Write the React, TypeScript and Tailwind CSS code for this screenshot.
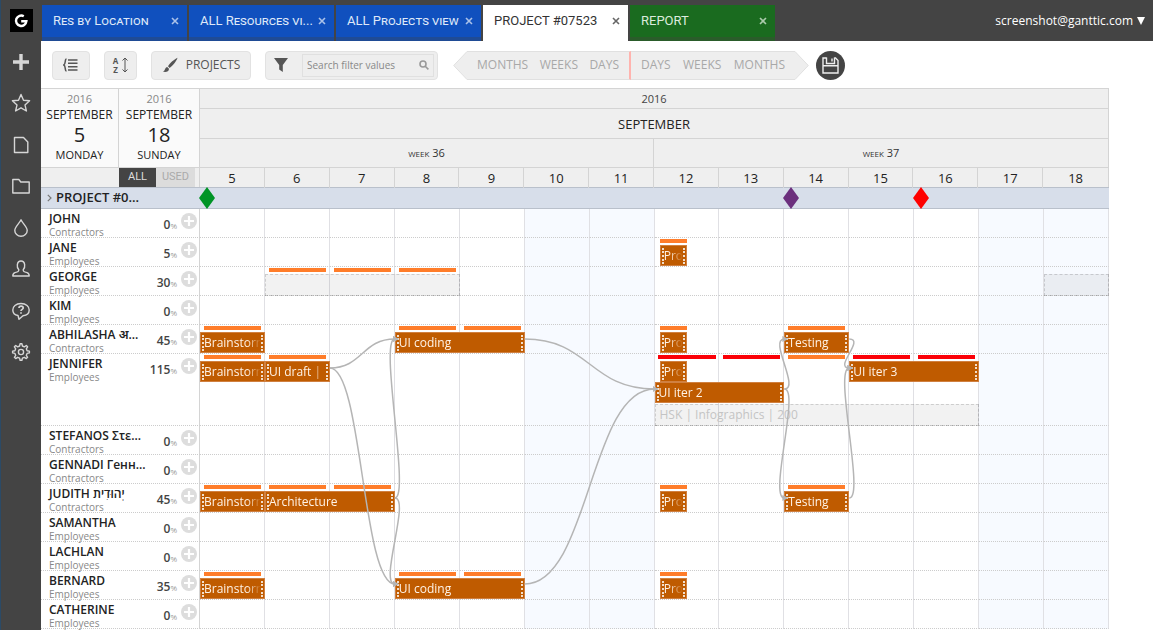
import { useState } from 'react';
import type { ReactNode } from 'react';

type Span = [start: number, end: number];

interface Task {
  label: string;
  span: Span;
  lane?: number;
}

interface Resource {
  name: string;
  group: string;
  load: number;
  tall?: boolean;
  tasks?: Task[];
  loads?: Span[];
  overloads?: Span[];
  ghosts?: Task[];
}

// days are counted from the first visible one, so 0 is September 5
const DAYS = [5, 6, 7, 8, 9, 10, 11, 12, 13, 14, 15, 16, 17, 18];
const WEEKEND = [10, 11, 17, 18];
const PRO: Span = [7.08, 7.5];

const day = (n: number): Span => [n + 0.06, n + 0.94];

const RESOURCES: Resource[] = [
  { name: 'JOHN', group: 'Contractors', load: 0 },
  { name: 'JANE', group: 'Employees', load: 5, tasks: [{ label: 'Pro', span: PRO }], loads: [PRO] },
  {
    name: 'GEORGE',
    group: 'Employees',
    load: 30,
    loads: [day(1), day(2), day(3)],
    ghosts: [{ label: '', span: [1, 4] }, { label: '', span: [13, 14] }],
  },
  { name: 'KIM', group: 'Employees', load: 0 },
  {
    name: 'ABHILASHA अ...',
    group: 'Contractors',
    load: 45,
    tasks: [
      { label: 'Brainstorm', span: [0, 1] },
      { label: 'UI coding', span: [3, 5] },
      { label: 'Pro', span: PRO },
      { label: 'Testing', span: [9, 10] },
    ],
    loads: [day(0), day(3), day(4), PRO, day(9)],
  },
  {
    name: 'JENNIFER',
    group: 'Employees',
    load: 115,
    tall: true,
    tasks: [
      { label: 'Brainstorm', span: [0, 1] },
      { label: 'UI draft |', span: [1, 2] },
      { label: 'Pro', span: PRO },
      { label: 'UI iter 2', span: [7, 9], lane: 1 },
      { label: 'UI iter 3', span: [10, 12] },
    ],
    loads: [day(0), day(1), day(9)],
    overloads: [day(7), day(8), day(10), day(11)],
    ghosts: [{ label: 'HSK | Infographics | 200', span: [7, 12], lane: 2 }],
  },
  { name: 'STEFANOS Στε...', group: 'Contractors', load: 0 },
  { name: 'GENNADI Генн...', group: 'Contractors', load: 0 },
  {
    name: 'JUDITH יְהוּדִית',
    group: 'Contractors',
    load: 45,
    tasks: [
      { label: 'Brainstorm', span: [0, 1] },
      { label: 'Architecture', span: [1, 3] },
      { label: 'Pro', span: PRO },
      { label: 'Testing', span: [9, 10] },
    ],
    loads: [day(0), day(1), day(2), PRO, day(9)],
  },
  { name: 'SAMANTHA', group: 'Employees', load: 0 },
  { name: 'LACHLAN', group: 'Employees', load: 0 },
  {
    name: 'BERNARD',
    group: 'Employees',
    load: 35,
    tasks: [
      { label: 'Brainstorm', span: [0, 1] },
      { label: 'UI coding', span: [3, 5] },
      { label: 'Pro', span: PRO },
    ],
    loads: [day(0), day(3), day(4), PRO],
  },
  { name: 'CATHERINE', group: 'Employees', load: 0 },
];

const TABS = [
  { label: 'Res by Location', tone: 'blue' },
  { label: 'ALL Resources vi...', tone: 'blue' },
  { label: 'ALL Projects view', tone: 'blue' },
  { label: 'PROJECT #07523', tone: 'white' },
  { label: 'REPORT', tone: 'green' },
];

const TAB_TONES: Record<string, string> = {
  blue: 'bg-[#1050be] border-[#1f4b95] text-[#dfe8f8]',
  white: 'bg-white border-white text-[#333]',
  green: 'bg-[#1a6b1f] border-[#2a5c2a] text-[#dcebdc]',
};

const LANES = ['top-[7px]', 'top-[28px]', 'top-[50px]'];

// dependency lines, [from day, from y, to day, to y]
const LINKS = [
  [2, 159, 3, 130],
  [2, 159, 3, 375],
  [3, 289, 3, 130],
  [3, 289, 3, 375],
  [5, 130, 7, 180],
  [5, 375, 7, 180],
  [9, 180, 9, 130],
  [9, 180, 9, 289],
  [10, 130, 10, 159],
  [10, 289, 10, 159],
];

const place = ([start, end]: Span) => ({
  left: `${(start / 14) * 100}%`,
  width: `${((end - start) / 14) * 100}%`,
});

const linkPath = ([d1, y1, d2, y2]: number[]) => {
  const x1 = d1 * 65;
  const x2 = d2 * 65;
  const bend = d1 === d2 ? 16 : (x2 - x1) / 2;
  return `M${x1} ${y1} C${x1 + bend} ${y1} ${x2 - bend} ${y2} ${x2} ${y2}`;
};

const LineIcon = ({ children }: { children: ReactNode }) => (
  <svg viewBox="0 0 20 20" className="size-5" fill="none" stroke="currentColor" strokeWidth="1.4" strokeLinejoin="round">
    {children}
  </svg>
);

const MENU = [
  { label: 'Add', icon: <path d="M10 2v16M2 10h16" strokeWidth="3.4" /> },
  { label: 'Favourites', icon: <path d="M10 1.5l2.5 5.7 6.1.6-4.6 4.1 1.4 6.1-5.4-3.2L4.6 18 6 11.9 1.4 7.8l6.1-.6z" /> },
  { label: 'Pages', icon: <path d="M3.5 2.5h9L16.8 7v10.5H3.5z" /> },
  { label: 'Projects', icon: <path d="M1.8 17V3.5h6l2 2.5h8.4v11z" /> },
  { label: 'Colors', icon: <path d="M10 1.8C8 6 3.8 8.7 3.8 12.4a6.2 5.8 0 0 0 12.4 0C16.2 8.7 12 6 10 1.8z" /> },
  {
    label: 'Resources',
    icon: <path d="M7.8 10.8C5.5 8.5 5.5 2 10 2s4.5 6.5 2.2 8.8c0 1.7.6 1.9 3.8 2.8 1.8.5 2.2 1.6 2.2 3.4H1.8c0-1.8.4-2.9 2.2-3.4 3.2-.9 3.8-1.100 3.8-2.800z" />,
  },
  {
    label: 'Help',
    icon: (
      <>
        <path d="M7 14.5C3.5 14 1.8 11.8 1.8 9c0-3.5 3-6.5 8.2-6.5s8.2 3 8.2 6.5c0 3.2-2.7 5.3-6.2 5.7L8 18.3z" />
        <path d="M8 7c0-2.4 4.2-2.4 4.2 0C12.2 8.4 10 8.4 10 10M10 11.2v1.6" strokeWidth="1.7" />
      </>
    ),
  },
  {
    label: 'Settings',
    icon: (
      <>
        <circle cx="10" cy="10" r="2.6" />
        <path d="M8.6 4l.5-2.300h1.800l.5 2.300 1.900.8 2-1.300 1.300 1.300-1.300 2 .8 1.900 2.300.4v1.800l-2.300.5-.8 1.900 1.300 2-1.300 1.300-2-1.300-1.900.8-.5 2.200H9.100l-.5-2.200-1.900-.8-2 1.300-1.300-1.300 1.300-2-.8-1.900-2.300-.5V9.100l2.300-.4.8-1.900-1.300-2 1.300-1.300 2 1.300z" />
      </>
    ),
  },
];

const Sidebar = () => (
  <nav className="flex w-[41px] shrink-0 flex-col items-center border-l border-[#2b4a66] bg-[#444] pt-[9px] text-[#d6d6d6]">
    <a href="#home" aria-label="Ganttic" className="flex size-[23px] items-center justify-center bg-black">
      <svg viewBox="0 0 16 16" className="size-4" fill="none" stroke="#fff" strokeWidth="2.4">
        <path d="M10.8 3.2A5.2 5.2 0 1 0 13.4 8.200H8.200" />
      </svg>
    </a>
    <ul className="mt-5 flex h-[310px] flex-col justify-between">
      {MENU.map((item) => (
        <li key={item.label} className="flex">
          <button type="button" aria-label={item.label}>
            <LineIcon>{item.icon}</LineIcon>
          </button>
        </li>
      ))}
    </ul>
  </nav>
);

const TopBar = () => (
  <header className="flex h-[41px] items-end justify-between bg-[#444]">
    <div className="flex gap-0.5 pl-px">
      {TABS.map((tab) => (
        <div key={tab.label} className={`flex h-9 w-[145px] items-center border-b-4 pr-2 pl-[11px] ${TAB_TONES[tab.tone]}`}>
          <button type="button" className="text-left font-[Roboto,sans-serif] text-[13px] leading-6 whitespace-nowrap [font-variant-caps:small-caps]">
            {tab.label}
          </button>
          <button type="button" aria-label={`Close ${tab.label}`} className="ml-auto">
            <svg viewBox="0 0 8 8" className="size-2 opacity-75" stroke="currentColor" strokeWidth="1.6">
              <path d="M1 1l6 6M7 1L1 7" />
            </svg>
          </button>
        </div>
      ))}
    </div>
    <button type="button" className="flex h-[41px] items-center gap-1 pr-2 text-xs text-white">
      screenshot@ganttic.com
      <svg viewBox="0 0 8 8" className="size-2" fill="currentColor">
        <path d="M0 0h8L4 8z" />
      </svg>
    </button>
  </header>
);

const toolButton = 'flex h-[29px] items-center rounded-sm border border-[#e2e2e2] bg-[#eee] text-[#555]';

const Toolbar = () => (
  <div className="flex h-[47px] items-center pt-px pl-[11px]">
    <button type="button" aria-label="Group" className={`${toolButton} w-[38px] justify-center`}>
      <svg viewBox="0 0 16 14" className="h-3.5 w-4" fill="none" stroke="currentColor" strokeWidth="1.5">
        <path d="M3.5 1C1.5 1 3 6 .8 7 3 8 1.5 13 3.5 13" />
        <path d="M5 2h9.500M5 5.300h9.500M5 8.700h9.500M5 12h9.500" />
      </svg>
    </button>
    <button type="button" aria-label="Sort" className={`${toolButton} ml-[14px] w-[33px] justify-center gap-1`}>
      <span className="flex flex-col text-[8px] leading-[9px] font-bold">
        <span>A</span>
        <span>Z</span>
      </span>
      <svg viewBox="0 0 6 16" className="h-4 w-1.5" fill="none" stroke="currentColor">
        <path d="M3 1v14M.5 3.500L3 1l2.500 2.500M.5 12.500L3 15l2.500-2.500" />
      </svg>
    </button>
    <button type="button" className={`${toolButton} ml-[14px] w-[100px] justify-center gap-2 text-xs`}>
      <svg viewBox="0 0 16 16" className="size-4" fill="currentColor">
        <path d="M15.5.8C12 2.500 7.500 6.500 6 9.300l1.700 1.600C10.500 9 14.500 4.500 15.500.8zM5.200 10c-2 .2-2 2.400-2.800 3.500-.4.6-1 .9-1.700 1 2.600 1 6.300.4 6.300-2.800z" />
      </svg>
      PROJECTS
    </button>
    <div className={`${toolButton} ml-[14px] w-[173px] justify-between pr-[3px] pl-2`}>
      <svg viewBox="0 0 14 14" className="size-3.5 shrink-0" fill="currentColor">
        <path d="M0 0h14L8.800 7v7L5.200 11.500V7z" />
      </svg>
      <label className="flex h-[23px] w-[132px] items-center border border-[#e0e0e0] pr-1 pl-1">
        <span className="sr-only">Search filter values</span>
        <input type="text" placeholder="Search filter values" className="min-w-0 flex-1 text-[10px] outline-none placeholder:text-[#888]" />
        <svg viewBox="0 0 10 10" className="size-2.5 shrink-0 text-[#999]" fill="none" stroke="currentColor" strokeWidth="1.6">
          <circle cx="4" cy="4" r="3" />
          <path d="M6.200 6.200l3.200 3.200" />
        </svg>
      </label>
    </div>
    <div className="ml-[15px] flex h-[29px] text-xs text-[#a8a8a8]">
      <svg viewBox="0 0 14 29" className="h-[29px] w-3.5" fill="#eee" stroke="#e0e0e0">
        <path d="M14 .5L.7 14.500 14 28.500" />
      </svg>
      <div className="flex w-[164px] items-center justify-between border-y border-r-2 border-y-[#e0e0e0] border-r-[#ffb3ae] bg-[#eee] px-2.5">
        <button type="button">MONTHS</button>
        <button type="button">WEEKS</button>
        <button type="button">DAYS</button>
      </div>
      <div className="flex w-[164px] items-center justify-between border-y border-[#e0e0e0] bg-[#eee] px-2.5">
        <button type="button">DAYS</button>
        <button type="button">WEEKS</button>
        <button type="button">MONTHS</button>
      </div>
      <svg viewBox="0 0 14 29" className="h-[29px] w-3.5" fill="#eee" stroke="#e0e0e0">
        <path d="M0 .5L13.300 14.500 0 28.500" />
      </svg>
    </div>
    <button type="button" aria-label="Save" className="ml-[7px] flex size-[29px] items-center justify-center rounded-full bg-[#444]">
      <svg viewBox="0 0 17 17" className="size-[17px]" fill="none" stroke="#eee" strokeWidth="1.4">
        <path d="M4.500 1H1v15h15V3.500L13.500 1h-1" />
        <path d="M4.500 .5v6h8v-6M10 1.500v3M1 8.800h15" />
      </svg>
    </button>
  </div>
);

const DateBox = ({ date, weekday, className }: { date: number; weekday: string; className: string }) => (
  <button type="button" className={`flex flex-col items-center border-r border-[#d4d4d4] bg-[#fafafa] pt-1 ${className}`}>
    <span className="text-[11px] leading-3 text-[#888]">2016</span>
    <span className="text-xs leading-5 text-[#222]">SEPTEMBER</span>
    <span className="text-xl leading-5 text-[#222]">{date}</span>
    <span className="text-[11px] leading-5 text-[#222]">{weekday}</span>
  </button>
);

const ChartHeader = () => (
  <div className="flex h-[99px] border-t border-[#d4d4d4] text-[#222]">
    <div className="flex w-[159px] shrink-0 flex-col">
      <div className="flex h-[79px] border-b border-[#d4d4d4]">
        <DateBox date={5} weekday="MONDAY" className="w-[78px]" />
        <DateBox date={18} weekday="SUNDAY" className="flex-1" />
      </div>
      <div className="flex flex-1 border-r border-[#d4d4d4] bg-[#efefef] font-[Roboto,sans-serif] text-[11px]">
        <button type="button" className="ml-[78px] w-[37px] bg-[#444] text-[#ddd]">ALL</button>
        <button type="button" className="w-[39px] bg-[#dcdcdc] text-[#aaa]">USED</button>
      </div>
    </div>
    <div className="flex flex-1 flex-col border-r border-[#d4d4d4] bg-[#efefef] text-center">
      <div className="h-5 border-b border-[#d4d4d4] text-[11px] leading-5 text-[#444]">2016</div>
      <div className="h-[30px] border-b border-[#d4d4d4] text-[13px] leading-[30px]">SEPTEMBER</div>
      <div className="grid h-[29px] grid-cols-2 border-b border-[#d4d4d4] text-[11px] leading-7 text-[#333] [font-variant-caps:small-caps]">
        <span className="border-r border-[#d4d4d4]">week 36</span>
        <span>week 37</span>
      </div>
      <div className="grid flex-1 grid-cols-14 text-[13px] leading-5">
        {DAYS.map((d) => (
          <span key={d} className="border-r border-[#d4d4d4] last:border-r-0">{d}</span>
        ))}
      </div>
    </div>
  </div>
);

const Milestone = ({ at, className }: { at: number; className: string }) => (
  <svg viewBox="0 0 16 22" className={`absolute -top-px -ml-px h-[22px] w-4 ${className}`} style={{ left: `${(at / 14) * 100}%` }} fill="currentColor">
    <path d="M8 0l8 11-8 11L0 11z" />
  </svg>
);

const ProjectRow = () => (
  <div className="flex h-[22px] border-y border-[#b9c0cb] bg-[#d7deea]">
    <button type="button" className="flex w-[159px] shrink-0 items-center gap-1 pl-1.5 text-[13px] font-semibold text-[#222]">
      <svg viewBox="0 0 5 8" className="h-2 w-[5px]" fill="none" stroke="#777" strokeWidth="1.2">
        <path d="M.8.8L4 4 .8 7.2" />
      </svg>
      PROJECT #0...
    </button>
    <div className="relative flex-1">
      <Milestone at={0} className="text-[#009426]" />
      <Milestone at={9} className="text-[#6b2f7d]" />
      <Milestone at={11} className="text-[#fe0000]" />
    </div>
  </div>
);

const TaskBar = ({ task }: { task: Task }) => (
  <button
    type="button"
    className={`absolute flex h-[21px] items-center border border-[#d08040] bg-[#bf5b00] px-px text-left text-xs text-[#fff3e6] ${LANES[task.lane ?? 0]}`}
    style={place(task.span)}
  >
    <span className="h-4 shrink-0 border-l-2 border-dotted border-white/80" />
    <span className="min-w-0 flex-1 overflow-hidden whitespace-nowrap [mask-image:linear-gradient(to_left,transparent,black_14px)]">{task.label}</span>
    <span className="h-4 shrink-0 border-l-2 border-dotted border-white/80" />
  </button>
);

const ResourceRow = ({ resource }: { resource: Resource }) => (
  <div className={`flex ${resource.tall ? 'h-[72px]' : 'h-[29px]'}`}>
    <div className="flex w-[159px] shrink-0 border-r border-b border-r-[#d4d4d4] border-b-[#ccc] pt-0.5 pl-2 [border-bottom-style:dotted]">
      <div className="w-[100px]">
        <div className="text-xs leading-4 font-semibold whitespace-nowrap text-[#222]">{resource.name}</div>
        <div className="text-[10px] leading-[10px] text-[#888]">{resource.group}</div>
      </div>
      <div className="flex w-7 items-baseline justify-end pt-1 text-xs leading-5 font-semibold text-[#444]">
        {resource.load}
        <span className="text-[8px] font-normal text-[#999]">%</span>
      </div>
      <button type="button" aria-label={`Add task for ${resource.name}`} className="mt-0.5 ml-1 flex size-4 items-center justify-center self-start rounded-full bg-[#ddd]">
        <svg viewBox="0 0 10 10" className="size-2.5" stroke="#fff" strokeWidth="2.2">
          <path d="M5 0v10M0 5h10" />
        </svg>
      </button>
    </div>
    <div className="relative grid flex-1 grid-cols-14">
      {DAYS.map((d) => (
        <span
          key={d}
          className={`border-r border-b border-r-[#e0e0e4] border-b-[#ccc] [border-bottom-style:dotted] ${WEEKEND.includes(d) ? 'bg-[#f7faff]' : ''}`}
        />
      ))}
      {resource.ghosts?.map((ghost) => (
        <div
          key={ghost.span[0]}
          className={`absolute h-[22px] border border-dashed border-black/15 bg-black/5 pl-1 text-xs leading-5 text-[#c4c4c4] ${LANES[ghost.lane ?? 0]}`}
          style={place(ghost.span)}
        >
          {ghost.label}
        </div>
      ))}
      {resource.loads?.map((span) => (
        <span key={span[0]} className="absolute top-px h-1 bg-[#ff7d2a]" style={place(span)} />
      ))}
      {resource.overloads?.map((span) => (
        <span key={span[0]} className="absolute top-px h-1 bg-[#fb0007]" style={place(span)} />
      ))}
      {resource.tasks?.map((task) => (
        <TaskBar key={task.span[0]} task={task} />
      ))}
    </div>
  </div>
);

const Links = () => (
  <div className="pointer-events-none absolute top-0 right-0 left-[159px] h-[420px]">
    <svg viewBox="0 0 910 420" preserveAspectRatio="none" className="size-full" fill="none" stroke="#b5b5b5" strokeWidth="1.5">
      <defs>
        <marker id="tip" viewBox="0 0 6 6" refX="2" refY="3" markerWidth="4" markerHeight="4" orient="0">
          <path d="M0 0l6 3-6 3z" fill="#b5b5b5" stroke="none" />
        </marker>
      </defs>
      {LINKS.map((link) => (
        <path key={link.join()} d={linkPath(link)} markerEnd="url(#tip)" />
      ))}
    </svg>
  </div>
);

const App = () => {
  const [resources] = useState(RESOURCES);

  return (
    <div className="flex h-screen overflow-hidden bg-white font-['Open_Sans','Noto_Sans',sans-serif]">
      <Sidebar />
      <div className="min-w-0 flex-1">
        <TopBar />
        <Toolbar />
        <main className="mr-11">
          <ChartHeader />
          <ProjectRow />
          <div className="relative">
            {resources.map((resource) => (
              <ResourceRow key={resource.name} resource={resource} />
            ))}
            <Links />
          </div>
        </main>
      </div>
    </div>
  );
};

export default App;
